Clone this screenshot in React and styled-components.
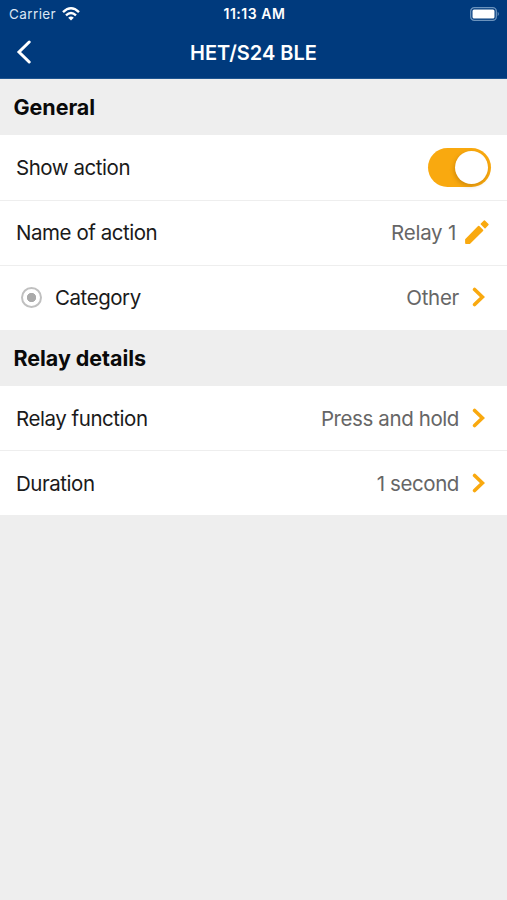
import styled, { createGlobalStyle } from "styled-components";

const GlobalStyle = createGlobalStyle`
    * {
        box-sizing: border-box;
    }

    body {
        margin: 0;
        background-color: #eeeeee;
        font-family: Inter, "Liberation Sans", sans-serif;
    }
`;

const Screen = styled.main`
    min-height: 100vh;
    background-color: #eeeeee;
`;

const TopBar = styled.header`
    height: 79px;
    border-bottom: 1px solid #1f5590;
    background-color: #003a7d;
    color: white;
`;

const StatusBar = styled.div`
    height: 27px;
    padding: 0 7px 0 9px;
    display: grid;
    grid-template-columns: 1fr auto 1fr;
    align-items: center;
    font-size: 13.5px;
`;

const Carrier = styled.div`
    display: flex;
    align-items: center;
    gap: 6px;
    color: #dbe6f3;
    letter-spacing: 0.4px;
`;

const Clock = styled.time`
    font-size: 14px;
    font-weight: 600;
    letter-spacing: 0.55px;
`;

const Battery = styled.svg`
    justify-self: end;
`;

const NavBar = styled.nav`
    height: 50px;
    padding: 0 16px;
    display: grid;
    grid-template-columns: 40px 1fr 40px;
    align-items: center;
`;

const BackButton = styled.button`
    display: flex;
    padding: 0;
    border: none;
    background: none;
    color: white;
`;

const Title = styled.h1`
    margin: 0;
    padding-top: 2px;
    font-size: 20px;
    font-weight: 600;
    text-align: center;
    white-space: nowrap;
`;

const SectionTitle = styled.h2`
    height: 56px;
    margin: 0;
    padding: 0 13.5px;
    display: flex;
    align-items: center;
    font-size: 21.5px;
    font-weight: 700;
    color: #0a0a0a;
    letter-spacing: -0.05px;
`;

const Row = styled.div`
    height: ${props => (props.$last ? 64 : 65)}px;
    padding: 0 16px;
    display: flex;
    align-items: center;
    border-bottom: ${props => (props.$last ? "none" : "1px solid #eeeeee")};
`;

const Group = styled.section`
    background-color: white;
    padding-top: ${props => (props.$first ? 1 : 0)}px;

    ${Row} {
        padding-bottom: ${props => (props.$first ? 2 : 0)}px;
    }
`;

const Label = styled.span`
    flex: 1;
    font-size: 20.5px;
    color: #1a1a1a;
    letter-spacing: -0.45px;
`;

const Value = styled.span`
    font-size: 20.5px;
    color: #666666;
    letter-spacing: ${props => props.$spacing ?? -0.4}px;
`;

const RadioMark = styled.span`
    width: 21px;
    height: 21px;
    margin: 0 13px 0 5px;
    border: 2px solid #c0c0c0;
    border-radius: 50%;
    background: radial-gradient(circle, #aaaaaa 4.3px, transparent 5px);
`;

const Switch = styled.button`
    width: 63px;
    height: 39px;
    padding: 3px;
    display: flex;
    justify-content: flex-end;
    border: none;
    border-radius: 20px;
    background-color: #f9a90f;
`;

const Knob = styled.span`
    width: 33px;
    height: 33px;
    border-radius: 50%;
    background-color: white;
    box-shadow: -1px 2px 4px rgba(120, 70, 0, 0.3);
`;

const ChevronIcon = styled.svg`
    margin: 0 6px 0 13px;
`;

const PencilIcon = styled.svg`
    margin: 0 2px 0 9px;
`;

function Chevron() {
    return (
        <ChevronIcon width="13" height="20" viewBox="0 0 13 20" fill="none">
            <path d="M2.6 2.5L10.4 10L2.6 17.5" stroke="#f9a90f" strokeWidth="3.6" strokeLinecap="round" />
        </ChevronIcon>
    )
}

function Pencil() {
    return (
        <PencilIcon width="24" height="24" viewBox="0 0 24 24" fill="#f9a90f" stroke="#f9a90f" strokeLinejoin="round">
            <path d="M1 19.6V23H4.5L17.4 10.3L13.7 6.6Z" strokeWidth="1.8" />
            <path d="M16.3 4L19.4 1L23 4.6L20 7.7Z" strokeWidth="1.4" />
        </PencilIcon>
    )
}

function SelectRow({ label, value, spacing, radio, last }) {
    return (
        <Row $last={last}>
            {radio && <RadioMark />}
            <Label>{label}</Label>
            <Value $spacing={spacing}>{value}</Value>
            <Chevron />
        </Row>
    )
}

function App() {

    return (
        <Screen>
            <GlobalStyle />
            <TopBar>
                <StatusBar>
                    <Carrier>
                        Carrier
                        <svg width="18" height="14" viewBox="0 0 18 14" fill="none" stroke="white" strokeWidth="2.4">
                            <path d="M1 5.2Q9-2.6 17 5.2" />
                            <path d="M4 8.4Q9 3.8 14 8.4" />
                            <path d="M6.2 10.7Q9 8.2 11.8 10.7L9 13.5Z" fill="white" stroke="none" />
                        </svg>
                    </Carrier>
                    <Clock>11:13 AM</Clock>
                    <Battery width="30" height="14" viewBox="0 0 30 14">
                        <rect x="0.7" y="0.7" width="25.6" height="12.6" rx="3.6" fill="none" stroke="#6b93bd" strokeWidth="1.3" />
                        <rect x="2.5" y="2.5" width="22" height="9" rx="1.5" fill="white" />
                        <path d="M27.7 4.8Q30 7 27.7 9.2Z" fill="#6b93bd" />
                    </Battery>
                </StatusBar>
                <NavBar>
                    <BackButton aria-label="Back">
                        <svg width="16" height="24" viewBox="0 0 16 24" fill="none" stroke="white" strokeWidth="3">
                            <path d="M13.2 2L3 12L13.2 22" strokeLinecap="round" />
                        </svg>
                    </BackButton>
                    <Title>HET/S24 BLE</Title>
                </NavBar>
            </TopBar>
            <SectionTitle>General</SectionTitle>
            <Group $first>
                <Row>
                    <Label>Show action</Label>
                    <Switch role="switch" aria-checked="true" aria-label="Show action">
                        <Knob />
                    </Switch>
                </Row>
                <Row>
                    <Label>Name of action</Label>
                    <Value $spacing={-0.25}>Relay 1</Value>
                    <Pencil />
                </Row>
                <SelectRow label="Category" value="Other" spacing={-0.3} radio last />
            </Group>
            <SectionTitle>Relay details</SectionTitle>
            <Group>
                <SelectRow label="Relay function" value="Press and hold" />
                <SelectRow label="Duration" value="1 second" last />
            </Group>
        </Screen>
    )

}

export default App;
